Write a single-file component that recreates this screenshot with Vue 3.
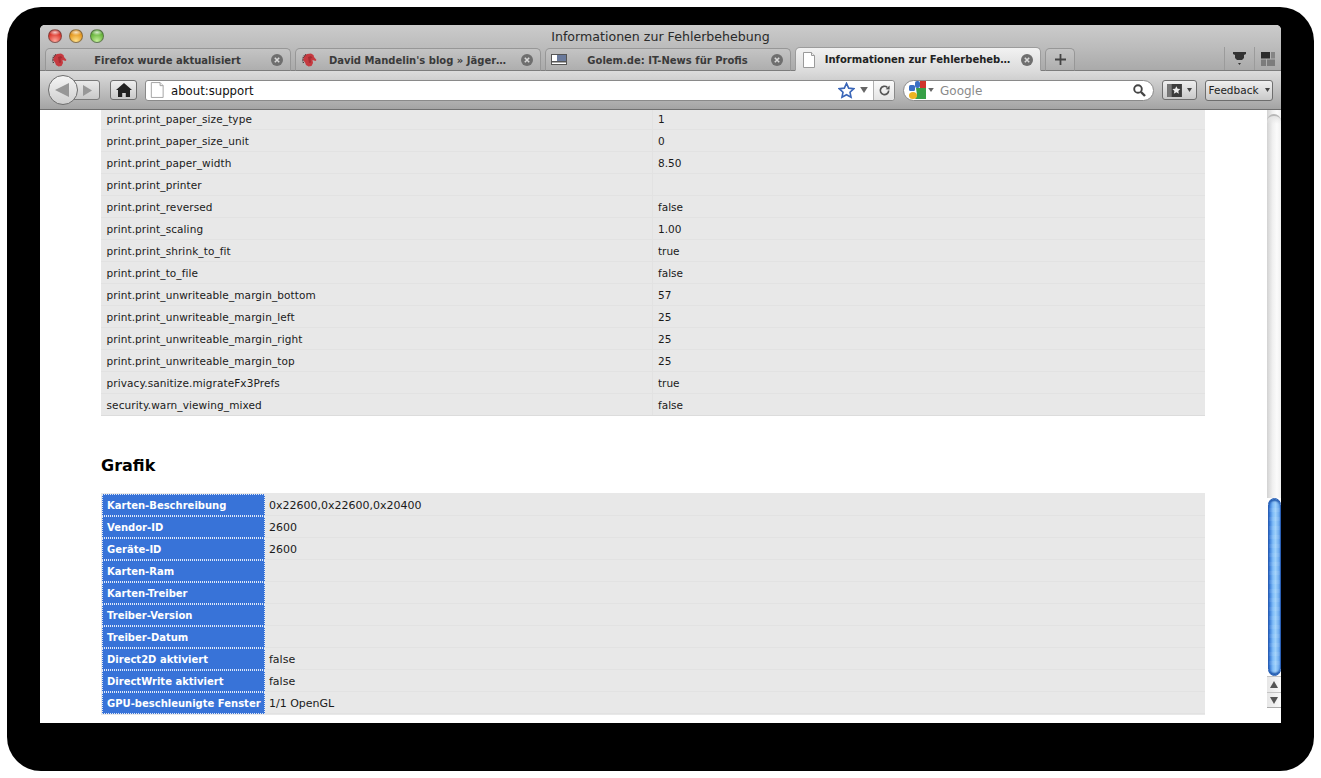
<script setup>
const tabs = [
  { title: 'Firefox wurde aktualisiert', icon: 'dino' },
  { title: "David Mandelin's blog » Jäger…", icon: 'dino' },
  { title: 'Golem.de: IT-News für Profis', icon: 'golem' },
  { title: 'Informationen zur Fehlerbeheb…', icon: 'page', active: true },
]
const prefs = [
  ['print.print_paper_size_type', '1'],
  ['print.print_paper_size_unit', '0'],
  ['print.print_paper_width', '8.50'],
  ['print.print_printer', ''],
  ['print.print_reversed', 'false'],
  ['print.print_scaling', '1.00'],
  ['print.print_shrink_to_fit', 'true'],
  ['print.print_to_file', 'false'],
  ['print.print_unwriteable_margin_bottom', '57'],
  ['print.print_unwriteable_margin_left', '25'],
  ['print.print_unwriteable_margin_right', '25'],
  ['print.print_unwriteable_margin_top', '25'],
  ['privacy.sanitize.migrateFx3Prefs', 'true'],
  ['security.warn_viewing_mixed', 'false'],
]
const gfx = [
  ['Karten-Beschreibung', '0x22600,0x22600,0x20400'],
  ['Vendor-ID', '2600'],
  ['Geräte-ID', '2600'],
  ['Karten-Ram', ''],
  ['Karten-Treiber', ''],
  ['Treiber-Version', ''],
  ['Treiber-Datum', ''],
  ['Direct2D aktiviert', 'false'],
  ['DirectWrite aktiviert', 'false'],
  ['GPU-beschleunigte Fenster', '1/1 OpenGL'],
]
</script>

<template>
  <div class="page">
    <div class="backdrop">
      <div class="window">
        <div class="titlebar">
          <div class="lights">
            <span class="light red"></span>
            <span class="light amber"></span>
            <span class="light green"></span>
          </div>
          <div class="wintitle">Informationen zur Fehlerbehebung</div>
        </div>

        <div class="tabbar">
          <div v-for="t in tabs" :key="t.title" class="tab" :class="{ active: t.active }">
            <svg v-if="t.icon === 'dino'" class="fav" viewBox="0 0 16 16">
              <path d="M2 8 3 4 6 2 10 1.500l2.500 1.500 .5 2 2.500 3-1 1-3-1 .5 3-1.500 3-3 .5-2.500-1.500-1-2.500z" fill="#c53a40" />
              <path d="M2.500 11 1.500 8 2.500 4.500 5 2.500" fill="none" stroke="#4a3436" stroke-width="1.300" stroke-dasharray="1 .8" />
              <path d="M7 5l3-1 1.500 2-2 .5 .5 4-2 .5z" fill="#a62c32" />
            </svg>
            <svg v-else-if="t.icon === 'golem'" class="fav" viewBox="0 0 16 16">
              <rect x=".5" y="2.500" width="15" height="10" fill="#fff" stroke="#555" />
              <rect x="6" y="3" width="9" height="6" fill="#6a7a9c" />
              <rect x="1" y="9" width="14" height="1.500" fill="#555" />
            </svg>
            <svg v-else class="fav" viewBox="0 0 16 16">
              <path d="M2.500.5h8l3 3v12h-11z" fill="#fff" stroke="#9a9a9a" />
              <path d="M10.500.5v3h3" fill="#eee" stroke="#9a9a9a" />
            </svg>
            <span class="tabtitle">{{ t.title }}</span>
            <svg class="close" viewBox="0 0 12 12">
              <circle cx="6" cy="6" r="6" fill="#6e6e6e" />
              <path d="M3.800 3.800l4.400 4.400M8.200 3.800 3.800 8.200" stroke="#d8d8d8" stroke-width="1.600" />
            </svg>
          </div>
          <div class="tab newtab">
            <svg viewBox="0 0 11 11" class="plus"><path d="M5.500 0v11M0 5.500h11" stroke="#444" stroke-width="1.800" /></svg>
          </div>
          <div class="tabtools">
            <div class="tabtool first">
              <svg viewBox="0 0 13 14" class="t1">
                <path d="M0 0h13v2l-2 1v3l-2 2H4L2 6V3L0 2z" fill="#333" />
                <path d="M5 11h3l-1.500 2z" fill="#333" />
              </svg>
            </div>
            <div class="tabtool">
              <svg viewBox="0 0 14 14" class="t2">
                <rect x="0" y="0" width="9" height="6.500" fill="#2c2c2c" />
                <rect x="10" y="0" width="4" height="6.500" fill="#858585" />
                <rect x="0" y="7.500" width="5" height="6.500" fill="#7c7c7c" />
                <rect x="6" y="7.500" width="8" height="6.500" fill="#7c7c7c" />
              </svg>
            </div>
          </div>
        </div>

        <div class="toolbar">
          <div class="nav">
            <div class="forward">
              <svg viewBox="0 0 10 12" class="arrow"><path d="M0 0l10 6-10 6z" fill="#989898" /></svg>
            </div>
            <div class="back">
              <svg viewBox="0 0 14 14" class="arrowb"><path d="M14 0v14L0 7z" fill="#979797" /></svg>
            </div>
          </div>
          <div class="btn home">
            <svg viewBox="0 0 16 14" class="homeicon"><path d="M8 0l8 7h-2v7H9.800v-4H6.200v4H2V7H0z" fill="#222" /></svg>
          </div>
          <div class="urlbar">
            <svg class="urlfav" viewBox="0 0 16 18">
              <path d="M1.500.5h10l3.500 3.500v13.500h-13.500z" fill="#fff" stroke="#999" />
              <path d="M11.500.5v3.500h3.500" fill="#eee" stroke="#999" />
            </svg>
            <span class="urltext">about:support</span>
            <svg class="star" viewBox="0 0 18 18">
              <path d="M9 1.500l2.300 5 5.400.6-4 3.700 1.100 5.400L9 13.500l-4.800 2.700 1.100-5.400-4-3.700 5.400-.6z" fill="#fff" stroke="#3a66b8" stroke-width="1.700" />
            </svg>
            <svg class="drop" viewBox="0 0 9 7"><path d="M0 0h9L4.500 7z" fill="#666" /></svg>
            <div class="reload">
              <svg viewBox="0 0 14 14" class="reloadicon">
                <path d="M11.500 7a4.500 4.500 0 1 1-1.500-3.400" fill="none" stroke="#555" stroke-width="1.800" />
                <path d="M8.200 5.600 12.500 6V1.600z" fill="#555" />
              </svg>
            </div>
          </div>
          <div class="search">
            <svg class="glogo" viewBox="0 0 17 18">
              <rect x="6" y="0" width="5" height="7" rx="2" fill="#3a6fc4" />
              <rect x="0" y="4" width="6" height="6" rx="1.500" fill="#3a6fc4" />
              <rect x="11" y="0" width="6" height="8" fill="#d0342c" />
              <path d="M7 7h10v11H6l2-4z" fill="#37a047" />
              <ellipse cx="4" cy="14.500" rx="4" ry="3.500" fill="#eeb420" />
            </svg>
            <svg class="sdrop" viewBox="0 0 7 5"><path d="M0 0h7L3.500 5z" fill="#666" /></svg>
            <span class="stext">Google</span>
            <svg class="mag" viewBox="0 0 13 13">
              <circle cx="5" cy="5" r="3.800" fill="none" stroke="#444" stroke-width="1.900" />
              <path d="M8 8l4 4" stroke="#444" stroke-width="2.400" />
            </svg>
          </div>
          <div class="btn bm">
            <svg viewBox="0 0 16 14" class="bmicon">
              <rect width="16" height="14" fill="#3c3c3c" />
              <rect width="5" height="14" fill="#777" />
              <path d="M10 2.500l1.300 2.700 3 .3-2.200 2 .6 3-2.700-1.500-2.700 1.500.6-3-2.200-2 3-.3z" fill="#eee" />
            </svg>
            <svg class="minidrop" viewBox="0 0 5 4"><path d="M0 0h5L2.500 4z" fill="#444" /></svg>
          </div>
          <div class="btn feedback">
            <span>Feedback</span>
            <svg class="minidrop" viewBox="0 0 5 4"><path d="M0 0h5L2.500 4z" fill="#444" /></svg>
          </div>
        </div>

        <div class="viewport">
          <div class="doc">
            <div class="table prefs">
              <div v-for="r in prefs" :key="r[0]" class="row prefrow">
                <div class="cell">{{ r[0] }}</div>
                <div class="cell">{{ r[1] }}</div>
              </div>
            </div>
            <h2 class="heading">Grafik</h2>
            <div class="table gfx">
              <div v-for="r in gfx" :key="r[0]" class="row gfxrow">
                <div class="cell th">{{ r[0] }}</div>
                <div class="cell">{{ r[1] }}</div>
              </div>
            </div>
          </div>
          <div class="scrollcol">
            <div class="scrollbar">
              <div class="track"><div class="trackcap"></div></div>
              <div class="thumb"></div>
              <div class="sbtn up"><svg viewBox="0 0 8 7"><path d="M4 0l4 7H0z" fill="#555" /></svg></div>
              <div class="sbtn down"><svg viewBox="0 0 8 7"><path d="M0 0h8L4 7z" fill="#555" /></svg></div>
            </div>
          </div>
        </div>
      </div>
    </div>
  </div>
</template>

<style>
html, body { margin: 0; background: #fff; overflow: hidden; }
</style>

<style scoped>
.page {
  width: 1321px; height: 778px; box-sizing: border-box; padding: 7px;
  background: #fff; font-family: "DejaVu Sans", sans-serif; overflow: hidden;
}
.backdrop {
  height: 764px; box-sizing: border-box; padding: 18px 33px 48px 33px;
  background: #000; border-radius: 34px;
}
.window {
  height: 698px; display: flex; flex-direction: column;
  border-radius: 5px 5px 0 0; overflow: hidden; background: #fff;
}
.titlebar {
  height: 22px; flex: none; display: flex; align-items: center; position: relative;
  background: linear-gradient(#cbcbcb, #bcbcbc);
}
.lights { display: flex; gap: 7px; padding-left: 8px; }
.light { width: 14px; height: 14px; border-radius: 50%; box-sizing: border-box; border: 1px solid rgba(70, 70, 70, .55); }
.red { background: radial-gradient(ellipse 6px 3px at 50% 20%, rgba(255, 255, 255, .75), transparent), radial-gradient(circle at 50% 90%, #ffa69a, #dc3a30 60%, #a8201c); }
.amber { background: radial-gradient(ellipse 6px 3px at 50% 20%, rgba(255, 255, 255, .75), transparent), radial-gradient(circle at 50% 90%, #ffe08a, #e69a22 60%, #b87414); }
.green { background: radial-gradient(ellipse 6px 3px at 50% 20%, rgba(255, 255, 255, .75), transparent), radial-gradient(circle at 50% 90%, #c4f09a, #6ab63e 60%, #3f8a22); }
.wintitle {
  position: absolute; left: 0; right: 0; top: 4px; text-align: center;
  font-size: 12.600px; line-height: 16px; color: #2a2a2a;
}
.tabbar {
  height: 24px; flex: none; display: flex; align-items: flex-end; gap: 4px; padding-left: 5px;
  background: linear-gradient(#bcbcbc, #a9a9a9); box-shadow: inset 0 -1px 0 #7c7c7c;
}
.tab {
  width: 246px; height: 23px; box-sizing: border-box; display: flex; align-items: center;
  padding: 1px 7px 0 5px; border: 1px solid #979797; border-bottom-color: #7c7c7c; border-radius: 5px 5px 0 0;
  background: linear-gradient(#c4c4c4, #aeaeae); font-size: 10px; font-weight: 700; color: #3a3a3a;
}
.tab.active { background: linear-gradient(#f2f2f2, #dcdcdc); border-color: #9c9c9c; border-bottom-color: #dcdcdc; color: #222; height: 24px; }
.fav { width: 16px; height: 16px; flex: none; }
.tabtitle { flex: 1; text-align: center; white-space: nowrap; padding: 0 4px 0 1px; }
.close { width: 12px; height: 12px; flex: none; }
.newtab { width: 30px; justify-content: center; padding: 0; }
.plus { width: 11px; height: 11px; }
.tabtools { margin-left: auto; display: flex; height: 24px; }
.tabtool { width: 26px; height: 23px; display: flex; align-items: center; justify-content: center; border-left: 1px solid #9b9b9b; }
.tabtool.first { width: 29px; }
.t1 { width: 13px; height: 14px; }
.t2 { width: 14px; height: 14px; }
.toolbar {
  height: 39px; flex: none; box-sizing: border-box; display: flex; align-items: center; padding: 0 8px;
  background: linear-gradient(#dcdcdc, #a4a4a4); border-bottom: 1px solid #6f6f6f;
}
.nav { width: 52px; height: 30px; position: relative; flex: none; margin-right: 10px; }
.back {
  position: absolute; left: 0; top: 0; width: 30px; height: 30px; box-sizing: border-box; border-radius: 50%;
  border: 1px solid #6e6e6e; background: linear-gradient(#f4f4f4, #cfcfcf); display: flex; align-items: center; justify-content: center;
}
.arrowb { width: 14px; height: 14px; margin-left: -3px; }
.forward {
  position: absolute; left: 20px; top: 5px; width: 32px; height: 20px; box-sizing: border-box; border-radius: 0 3px 3px 0;
  border: 1px solid #7a7a7a; background: linear-gradient(#eaeaea, #c8c8c8); display: flex; align-items: center; justify-content: flex-end; padding-right: 7px;
}
.arrow { width: 9px; height: 11px; }
.btn {
  height: 20px; box-sizing: border-box; flex: none; display: flex; align-items: center; justify-content: center;
  border: 1px solid #6e6e6e; border-radius: 3px; background: linear-gradient(#efefef, #c9c9c9);
}
.home { width: 27px; margin-right: 8px; }
.homeicon { width: 16px; height: 14px; }
.urlbar {
  width: 750px; height: 21px; box-sizing: border-box; flex: none; display: flex; align-items: center; margin-right: 8px;
  border: 1px solid #8a8a8a; border-radius: 3px; background: #fff; padding-left: 4px;
}
.urlfav { width: 14px; height: 16px; flex: none; margin-right: 7px; }
.urltext { flex: 1; font-size: 11.700px; color: #111; white-space: nowrap; padding-top: 1px; }
.star { width: 17px; height: 17px; flex: none; margin-right: 5px; }
.drop { width: 8px; height: 6px; flex: none; margin-right: 5px; }
.reload { width: 21px; align-self: stretch; box-sizing: border-box; border-left: 1px solid #b0b0b0; display: flex; align-items: center; justify-content: center; background: linear-gradient(#fafafa, #e4e4e4); border-radius: 0 3px 3px 0; }
.reloadicon { width: 13px; height: 13px; }
.search {
  width: 251px; height: 21px; box-sizing: border-box; flex: none; display: flex; align-items: center; margin-right: 8px;
  border: 1px solid #8a8a8a; border-radius: 11px; background: #fff; padding: 0 7px 0 5px;
}
.glogo { width: 17px; height: 18px; flex: none; margin-right: 2px; }
.sdrop { width: 6px; height: 4px; flex: none; margin-right: 6px; }
.stext { flex: 1; font-size: 12px; color: #8a8a8a; padding-top: 1px; }
.mag { width: 13px; height: 13px; flex: none; }
.bm { width: 35px; margin-right: 8px; gap: 5px; }
.bmicon { width: 15px; height: 13px; }
.minidrop { width: 5px; height: 4px; flex: none; }
.feedback { width: 68px; height: 21px; font-size: 10.500px; color: #222; gap: 6px; }
.viewport { flex: 1; display: flex; min-height: 0; background: #fff; }
.doc { flex: 1; min-width: 0; overflow: hidden; padding: 0 62px 0 61px; }
.table { background: #e8e8e8; font-size: 10.500px; color: #1a1a1a; }
.prefs { margin-top: -2px; }
.row { display: flex; height: 22px; box-sizing: border-box; border-bottom: 1px solid #e2e2e2; }
.row:last-child { border-bottom-color: #dcdcdc; }
.cell { display: flex; align-items: center; padding: 0 5px; white-space: nowrap; box-sizing: border-box; }
.prefrow .cell { padding-left: 5px; }
.prefrow .cell:first-child { width: 552px; padding-left: 5.500px; border-right: 1px solid #e2e2e2; letter-spacing: .1px; }
.prefrow { height: 22px; }
.prefrow .cell { padding-top: 1px; }
.gfx { padding: 1px 0 1px 1px; }
.gfxrow { border-bottom: 0; }
.gfxrow .cell:first-child { width: 163px; }
.gfxrow .cell:last-child { border-bottom: 1px solid #e2e2e2; flex: 1; padding: 1px 0 0 4px; font-size: 11px; }
.th {
  background: #3873d8; color: #fff; font-weight: 700; font-size: 10px; padding-left: 5px;
  outline: 1px dotted #dfe8f8; outline-offset: -1px;
}
.heading { margin: 38px 0 15px; font-size: 16px; line-height: 24px; font-weight: 700; color: #000; }
.scrollcol { width: 14px; flex: none; }
.scrollbar { height: 598px; display: flex; flex-direction: column; }
.track { flex: 1; padding-top: 4px; box-sizing: border-box; background: linear-gradient(90deg, #d2d2d2, #f0f0f0 40%, #fbfbfb 70%, #f0f0f0); }
.trackcap { height: 10px; box-sizing: border-box; border-radius: 7px 7px 0 0; border-top: 2px solid #b8b8b8; background: linear-gradient(#e4e4e4, transparent); }
.thumb {
  height: 178px; width: 13px; box-sizing: border-box; margin-left: 1px; flex: none; border-radius: 7px;
  border: 1px solid #2a5fb4; box-shadow: inset 0 3px 2px -1px #1f58ac, inset 0 -3px 2px -1px #1f58ac;
  background: repeating-linear-gradient(rgba(255, 255, 255, .08) 0 4px, transparent 4px 9px), linear-gradient(90deg, #2c6fd0, #7fbcf8 35%, #9ed0fb 60%, #5f9fe8);
}
.sbtn { height: 16px; flex: none; box-sizing: border-box; display: flex; align-items: center; justify-content: center; background: linear-gradient(90deg, #e6e6e6, #fafafa); border-top: 1px solid #c4c4c4; }
.sbtn svg { width: 8px; height: 7px; }
.down { border-bottom: 1px solid #aaa; }
</style>
